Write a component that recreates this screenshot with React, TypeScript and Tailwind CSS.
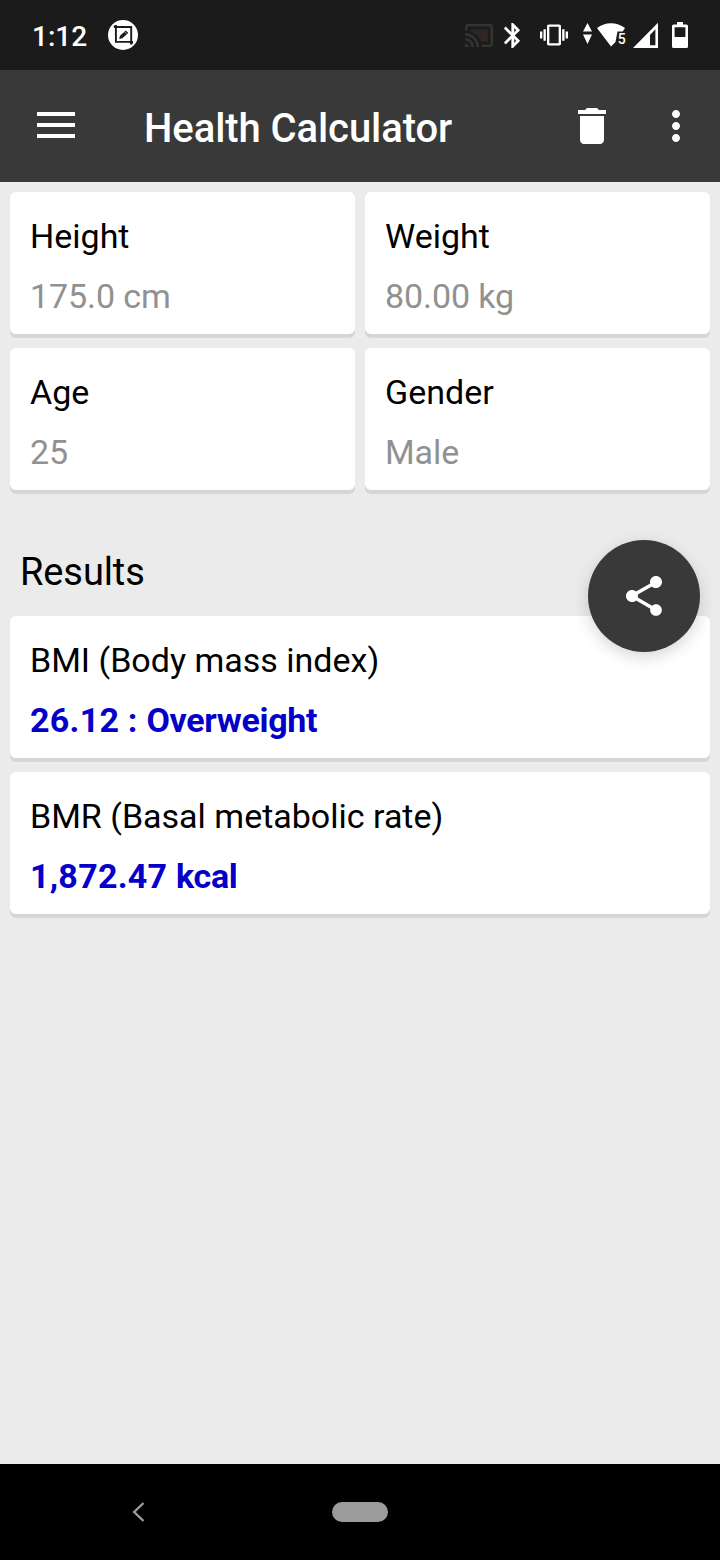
import React from 'react';
import { MdDelete, MdMoreVert, MdShare, MdVibration } from 'react-icons/md';

const measurements = [
    { label: "Height", value: "175.0 cm" },
    { label: "Weight", value: "80.00 kg" },
    { label: "Age", value: "25" },
    { label: "Gender", value: "Male" },
];

const results = [
    { label: "BMI (Body mass index)", value: "26.12 :", suffix: "Overweight" },
    { label: "BMR (Basal metabolic rate)", value: "1,872.47", suffix: "kcal" },
];

function StatusBar() {
    return (
        <div className="h-[70px] shrink-0 bg-[#1b1b1b] text-white flex items-center pl-8 pr-8">
            <span className="w-[76px] pt-1 text-[28px] leading-8 font-medium">1:12</span>

            {/* Screenshot notification */}
            <svg width="30" height="30" viewBox="0 0 30 30">
                <circle cx="15" cy="15" r="15" fill="#fff" />
                <path d="M6 7H23.2V24.5M7.9 5V21.9H25" fill="none" stroke="#1b1b1b" strokeWidth="1.9" />
                <circle cx="7.4" cy="6.6" r="1.7" fill="#1b1b1b" />
                <circle cx="23.4" cy="22.6" r="1.7" fill="#1b1b1b" />
                <path d="M11.2 18.9l.8-3.2 5.8-5.2 2.5 2.4-6 5.3z" fill="#1b1b1b" />
                <path d="M16.3 11.5l2.4 2.4" stroke="#fff" strokeWidth=".6" />
            </svg>

            <div className="ml-auto flex items-center">
                <svg className="mr-[11px]" width="28" height="23" viewBox="1 3 22 18" fill="#333">
                    <path d="M5 7v1.63c3.96 1.28 7.09 4.41 8.37 8.37H19V7z" fill="#2f2523" />
                    <path d="M1 18v3h3c0-1.66-1.34-3-3-3zm0-4v2c2.76 0 5 2.24 5 5h2c0-3.87-3.13-7-7-7zM1 10v2c4.97 0 9 4.03 9 9h2c0-6.08-4.93-11-11-11zm20-7H3c-1.1 0-2 .9-2 2v3h2V5h18v14h-7v2h7c1.1 0 2-.9 2-2V5c0-1.1-.9-2-2-2z" />
                </svg>
                <svg className="mr-5" width="16" height="25" viewBox="5 2 12.71 20" fill="#fff" stroke="#fff" strokeWidth=".3">
                    <path d="M17.71 7.71L12 2h-1v7.59L6.41 5 5 6.41 10.59 12 5 17.59 6.41 19 11 14.41V22h1l5.71-5.71-4.3-4.29 4.3-4.29zM13 5.83l1.88 1.88L13 9.59V5.83zm1.88 10.46L13 18.17v-3.76l1.88 1.88z" />
                </svg>
                <MdVibration className="mr-[15px]" size={28} />
                <svg className="mr-[5px]" width="9" height="26" viewBox="0 0 9 26" fill="#fff">
                    <path d="M4.5 1L9 9.5H0zM4.5 22L9 12.5H0z" />
                </svg>
                <svg className="mr-1.5" width="30" height="26" viewBox="0 0 30 26" fill="#fff">
                    <path d="M0 6C4 3 9 1.2 14 1.2S24 3 28 6L25.7 9.5H20.5L18.5 20 14 24.6z" />
                    <text x="20.8" y="22.2" fontSize="14" fontWeight="500">5</text>
                </svg>
                <svg className="mr-3.5" width="25" height="26" viewBox="0 0 25 26" fill="#fff">
                    <path d="M25 .8V26H0zM22.4 7.3L17 13v10.3h5.4z" fillRule="evenodd" />
                </svg>
                <svg width="16" height="26" viewBox="0 0 16 26" fill="#fff">
                    <path d="M5 0h6v2.5h3.5Q16 2.5 16 4v20.5q0 1.5-1.5 1.5h-13Q0 26 0 24.5V4q0-1.5 1.5-1.5H5zM2.6 5.2V15h10.8V5.2z" fillRule="evenodd" />
                </svg>
            </div>
        </div>
    );
}

function Header() {
    return (
        <header className="h-28 shrink-0 bg-[#393939] text-white flex items-center pl-[37px] pr-5">
            <button aria-label="Menu" className="w-[38px] h-7 pb-0.5 flex flex-col justify-between">
                <span className="h-1 w-full bg-white" />
                <span className="h-1 w-full bg-white" />
                <span className="h-1 w-full bg-white" />
            </button>
            <h1 className="ml-[69px] pt-1.5 text-[40px] leading-[48px] font-medium tracking-[-0.08px]">Health Calculator</h1>
            <div className="ml-auto flex items-center gap-9">
                <button aria-label="Delete"><MdDelete size={48} /></button>
                <button aria-label="More"><MdMoreVert size={48} /></button>
            </div>
        </header>
    );
}

function Card({ label, value, suffix }: { label: string, value: string, suffix?: string }) {
    return (
        <div className="h-[142px] rounded-md bg-white shadow-[0_4px_0_#d6d6d6] px-5 pt-6 flex flex-col gap-5 text-[34px] leading-10">
            <p className="text-black">{label}</p>
            {suffix ? (
                <p className="font-bold text-[#0500c8]">
                    <span className="tracking-[0.25px]">{value} </span>
                    <span className="tracking-[-0.3px]">{suffix}</span>
                </p>
            ) : (
                <p className="text-[#919191] tracking-[-0.1px]">{value}</p>
            )}
        </div>
    );
}

export default function App() {
    return (
        <div className="w-[720px] h-[1560px] flex flex-col overflow-hidden bg-[#ebebeb] font-['Roboto',sans-serif]">
            <StatusBar />
            <Header />

            <main className="flex-1 px-2.5 pt-2.5">
                <div className="grid grid-cols-2 gap-x-2.5 gap-y-3.5">
                    {measurements.map((item) => (
                        <Card key={item.label} label={item.label} value={item.value} />
                    ))}
                </div>

                <div className="relative h-[126px] pt-[58px] pl-2.5">
                    <h2 className="text-[38px] leading-[48px] text-black tracking-[-0.1px]">Results</h2>
                    <button
                        aria-label="Share"
                        className="absolute right-2.5 top-[50px] w-28 h-28 rounded-full bg-[#393939] text-white flex items-center justify-center shadow-[0_5px_16px_rgba(0,0,0,0.16)]"
                    >
                        <MdShare size={48} />
                    </button>
                </div>

                <div className="flex flex-col gap-3.5">
                    {results.map((item) => (
                        <Card key={item.label} label={item.label} value={item.value} suffix={item.suffix} />
                    ))}
                </div>
            </main>

            {/* Navigation bar */}
            <nav className="h-24 shrink-0 bg-black flex items-center pl-[132px]">
                <svg width="13" height="20" viewBox="0 0 13 20" fill="none" stroke="#9b9b9b" strokeWidth="2.4">
                    <path d="M11.5 1L2.2 10l9.3 9" />
                </svg>
                <div className="ml-[187px] w-14 h-5 rounded-full bg-[#9b9b9b]" />
            </nav>
        </div>
    );
}
